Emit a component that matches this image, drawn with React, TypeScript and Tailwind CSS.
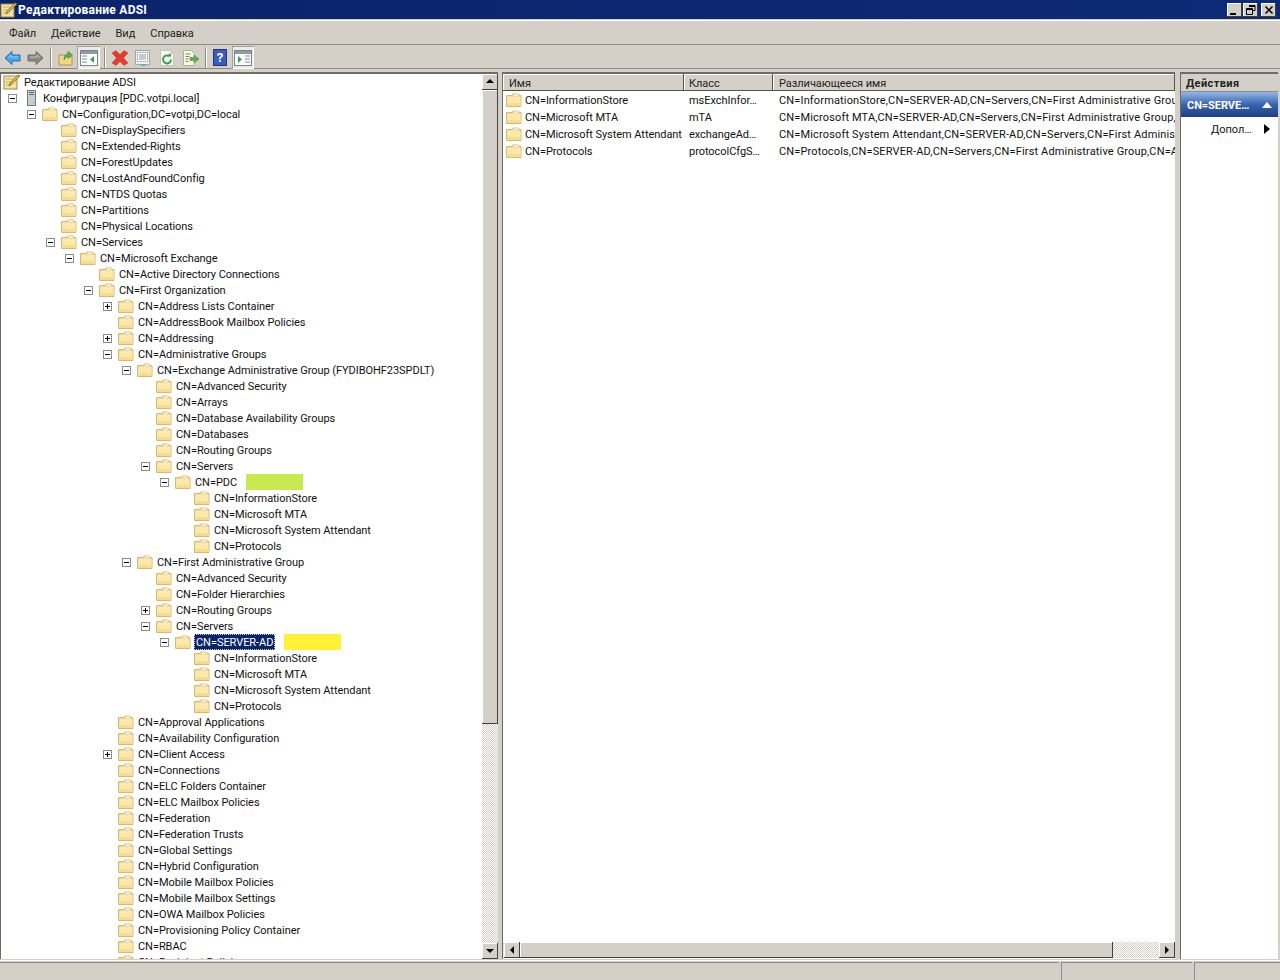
import type { ReactNode } from 'react'

type Node = { t: string; l: number; e?: '+' | '-'; mark?: 'green' | 'yellow'; sel?: boolean }

const stores = (): Node[] => [
  { t: 'CN=InformationStore', l: 10 },
  { t: 'CN=Microsoft MTA', l: 10 },
  { t: 'CN=Microsoft System Attendant', l: 10 },
  { t: 'CN=Protocols', l: 10 },
]

const tree: Node[] = [
  { t: 'CN=Configuration,DC=votpi,DC=local', l: 2, e: '-' },
  { t: 'CN=DisplaySpecifiers', l: 3 },
  { t: 'CN=Extended-Rights', l: 3 },
  { t: 'CN=ForestUpdates', l: 3 },
  { t: 'CN=LostAndFoundConfig', l: 3 },
  { t: 'CN=NTDS Quotas', l: 3 },
  { t: 'CN=Partitions', l: 3 },
  { t: 'CN=Physical Locations', l: 3 },
  { t: 'CN=Services', l: 3, e: '-' },
  { t: 'CN=Microsoft Exchange', l: 4, e: '-' },
  { t: 'CN=Active Directory Connections', l: 5 },
  { t: 'CN=First Organization', l: 5, e: '-' },
  { t: 'CN=Address Lists Container', l: 6, e: '+' },
  { t: 'CN=AddressBook Mailbox Policies', l: 6 },
  { t: 'CN=Addressing', l: 6, e: '+' },
  { t: 'CN=Administrative Groups', l: 6, e: '-' },
  { t: 'CN=Exchange Administrative Group (FYDIBOHF23SPDLT)', l: 7, e: '-' },
  { t: 'CN=Advanced Security', l: 8 },
  { t: 'CN=Arrays', l: 8 },
  { t: 'CN=Database Availability Groups', l: 8 },
  { t: 'CN=Databases', l: 8 },
  { t: 'CN=Routing Groups', l: 8 },
  { t: 'CN=Servers', l: 8, e: '-' },
  { t: 'CN=PDC', l: 9, e: '-', mark: 'green' },
  ...stores(),
  { t: 'CN=First Administrative Group', l: 7, e: '-' },
  { t: 'CN=Advanced Security', l: 8 },
  { t: 'CN=Folder Hierarchies', l: 8 },
  { t: 'CN=Routing Groups', l: 8, e: '+' },
  { t: 'CN=Servers', l: 8, e: '-' },
  { t: 'CN=SERVER-AD', l: 9, e: '-', sel: true, mark: 'yellow' },
  ...stores(),
  { t: 'CN=Approval Applications', l: 6 },
  { t: 'CN=Availability Configuration', l: 6 },
  { t: 'CN=Client Access', l: 6, e: '+' },
  { t: 'CN=Connections', l: 6 },
  { t: 'CN=ELC Folders Container', l: 6 },
  { t: 'CN=ELC Mailbox Policies', l: 6 },
  { t: 'CN=Federation', l: 6 },
  { t: 'CN=Federation Trusts', l: 6 },
  { t: 'CN=Global Settings', l: 6 },
  { t: 'CN=Hybrid Configuration', l: 6 },
  { t: 'CN=Mobile Mailbox Policies', l: 6 },
  { t: 'CN=Mobile Mailbox Settings', l: 6 },
  { t: 'CN=OWA Mailbox Policies', l: 6 },
  { t: 'CN=Provisioning Policy Container', l: 6 },
  { t: 'CN=RBAC', l: 6 },
  { t: 'CN=Recipient Policies', l: 6 },
]

const rows = [
  ['CN=InformationStore', 'msExchInfor…', 'CN=InformationStore,CN=SERVER-AD,CN=Servers,CN=First Administrative Group,CN=Administrative Groups'],
  ['CN=Microsoft MTA', 'mTA', 'CN=Microsoft MTA,CN=SERVER-AD,CN=Servers,CN=First Administrative Group,CN=Administrative Groups'],
  ['CN=Microsoft System Attendant', 'exchangeAd…', 'CN=Microsoft System Attendant,CN=SERVER-AD,CN=Servers,CN=First Administrative Group'],
  ['CN=Protocols', 'protocolCfgS…', 'CN=Protocols,CN=SERVER-AD,CN=Servers,CN=First Administrative Group,CN=Administrative Groups'],
]

function Folder() {
  return (
    <svg width="16" height="16" viewBox="0 0 16 16" className="shrink-0">
      <path d="M.5 3.500h5.500l1-1.500h5l1 1.500h2V14.500H.5z" fill="#f3dc9a" stroke="#d2b97e" />
      <rect x="1.500" y="5" width="13" height="9" fill="#fce9ab" />
      <rect x="1.500" y="11" width="13" height="3" fill="#f7dc8c" />
      <path d="M8 3h4" stroke="#fff" />
    </svg>
  )
}

function Snap() {
  return (
    <svg width="18" height="18" viewBox="0 0 18 18" className="shrink-0">
      <rect x="1" y="3" width="13" height="13" fill="#f2e2a4" stroke="#9a8a50" />
      <path d="M3 6h7M3 9h6M3 12h4" stroke="#c2ae6a" />
      <path d="M6 13l1-3 8-8 2 1-8 8z" fill="#e8b24a" stroke="#7a5a20" strokeWidth="0.7" />
    </svg>
  )
}

function Expander({ kind }: { kind: '+' | '-' }) {
  return (
    <span className="relative w-[9px] h-[9px] border border-[#8c8c8c] bg-white shrink-0">
      <span className="absolute left-[1px] top-[3px] w-[5px] h-px bg-black" />
      {kind === '+' && <span className="absolute left-[3px] top-[1px] w-px h-[5px] bg-black" />}
    </span>
  )
}

function TreeRow({ n }: { n: Node }) {
  const textX = 23 + 19 * n.l
  return (
    <div className="h-4 flex items-center relative whitespace-nowrap" style={{ paddingLeft: textX - 20 }}>
      {n.e && (
        <span className="absolute flex" style={{ left: textX - 35 }}>
          <Expander kind={n.e} />
        </span>
      )}
      <Folder />
      {n.sel ? (
        <span className="ml-[3px] px-px h-[16px] leading-[15px] bg-[#0a246a] text-white border border-dotted border-[#c8c8c8]">{n.t}</span>
      ) : (
        <span className="ml-1 mt-[2px]">{n.t}</span>
      )}
      {n.mark === 'green' && <span className="ml-[9px] w-[57px] h-4 bg-[#c9ea4f]" />}
      {n.mark === 'yellow' && <span className="ml-[9px] w-[57px] h-4 bg-[#fff236]" />}
    </div>
  )
}

function ScrollBtn({ dir }: { dir: 'up' | 'down' | 'left' | 'right' }) {
  const pts = { up: '1,6 9,6 5,2', down: '1,3 9,3 5,7', left: '7,1 7,9 3,5', right: '3,1 3,9 7,5' }[dir]
  return (
    <div className="w-4 h-4 shrink-0 bg-[#d4d0c8] shadow-[inset_-1px_-1px_0_#404040,inset_1px_1px_0_#fff] flex items-center justify-center">
      <svg width="10" height="10" viewBox="0 0 10 10">
        <polygon points={pts} fill="#000" />
      </svg>
    </div>
  )
}

function ToolBtn({ children, on, w }: { children: ReactNode; on?: boolean; w: string }) {
  return (
    <div className={`h-[23px] flex items-center justify-center shrink-0 ${w} ${on ? 'bg-[#ecebe8] shadow-[inset_1px_1px_0_#a5a29a,inset_-1px_-1px_0_#fff]' : ''}`}>
      {children}
    </div>
  )
}

function Sep() {
  return <div className="w-px h-[21px] bg-[#8f8c85] shadow-[1px_0_0_#fff] mx-[4px] shrink-0" />
}

function Arrow({ flip, c, s }: { flip?: boolean; c: string; s: string }) {
  return (
    <svg width="17" height="16" viewBox="0 0 17 16" style={flip ? { transform: 'scaleX(-1)' } : undefined}>
      <path d="M1 8l7-6.500V5h8v6H8v3.500z" fill={c} stroke={s} />
      <path d="M4 8l3-3v2h7" fill="none" stroke="#fff" strokeOpacity="0.45" />
    </svg>
  )
}

function PaneIcon({ right }: { right?: boolean }) {
  return (
    <svg width="18" height="16" viewBox="0 0 18 16">
      <rect x="0.500" y="0.500" width="17" height="15" fill="#fff" stroke="#77858f" />
      <rect x="1" y="1" width="16" height="3" fill="#8e9aa4" />
      <path d={right ? 'M11 6h5M11 9h5M11 12h5' : 'M2 6h5M2 9h5M2 12h5'} stroke="#7d8a94" />
      <path d={right ? 'M4 6v7l4-3.500z' : 'M14 6v7l-4-3.500z'} fill="#3f9e5e" />
    </svg>
  )
}

const headers = [
  ['Имя', 'w-[181px] pl-[6px]'],
  ['Класс', 'w-[89px] pl-[5px]'],
  ['Различающееся имя', 'flex-1 pl-[6px]'],
]

export default function App() {
  return (
    <div
      className="w-[1280px] h-[980px] overflow-hidden bg-[#d4d0c8] flex flex-col text-[11px] leading-4 text-[#111] tracking-[-0.05px]"
      style={{ fontFamily: 'Roboto, "Liberation Sans", sans-serif' }}
    >
      {/* title bar */}
      <div className="h-[19px] shrink-0 bg-gradient-to-r from-[#0a246a] to-[#0d2a78] flex items-center pr-[4px]">
        <Snap />
        <span className="text-white font-bold text-[12px] tracking-[0.25px]">Редактирование ADSI</span>
        <div className="ml-auto flex gap-px items-center">
          {['min', 'max'].map(k => (
            <div key={k} className="w-[15px] h-[14px] bg-[#d4d0c8] shadow-[inset_-1px_-1px_0_#404040,inset_1px_1px_0_#fff] flex items-center justify-center">
              {k === 'min' ? (
                <span className="w-[6px] h-[2px] bg-black mt-2 -ml-1" />
              ) : (
                <svg width="10" height="10" viewBox="0 0 10 10">
                  <path d="M3 .5h6v5H7M3 1.500h6M.5 3.500h6v6h-6zM.5 4.500h6" fill="none" stroke="#000" />
                </svg>
              )}
            </div>
          ))}
          <div className="w-[15px] h-[14px] ml-[2px] bg-[#d4d0c8] shadow-[inset_-1px_-1px_0_#404040,inset_1px_1px_0_#fff] flex items-center justify-center">
            <svg width="10" height="10" viewBox="0 0 10 10">
              <path d="M1.500 1.500l7 7M8.500 1.500l-7 7" stroke="#000" strokeWidth="1.500" />
            </svg>
          </div>
        </div>
      </div>

      {/* menu */}
      <div className="h-[25px] shrink-0 flex items-center gap-[15px] pl-[9px] pt-[2px] mt-px shadow-[inset_0_1px_0_#fff,inset_0_-1px_0_#8f8c85] text-[#222]">
        <span>Файл</span>
        <span>Действие</span>
        <span>Вид</span>
        <span>Справка</span>
      </div>

      {/* toolbar */}
      <div className="h-[24px] shrink-0 flex items-center pl-px pt-px shadow-[inset_0_-1px_0_#8f8c85]">
        <ToolBtn w="w-[23px]"><Arrow c="#4aa6e8" s="#1c6fb8" /></ToolBtn>
        <ToolBtn w="w-[22px]"><Arrow flip c="#8a8a86" s="#6c6c68" /></ToolBtn>
        <Sep />
        <ToolBtn w="w-[22px]">
          <svg width="16" height="17" viewBox="0 0 16 17">
            <path d="M1 6h5l1 1h7v9H1z" fill="#f2d784" stroke="#b0954f" />
            <path d="M6 11c0-4 1.500-6 4-6V2.500L14.500 6 10 9.500V7.500c-1.500 0-3 1.500-4 3.500z" fill="#5db04a" stroke="#2f7f2a" strokeWidth="0.6" />
          </svg>
        </ToolBtn>
        <ToolBtn on w="w-[23px]"><PaneIcon /></ToolBtn>
        <Sep />
        <ToolBtn w="w-[21px]">
          <svg width="18" height="16" viewBox="0 0 18 16">
            <path d="M1 3l4-2.500 4 4 4-4L17 3l-4.500 5 4.500 5-4 2.500-4-4-4 4L1 13l4.500-5z" fill="#e33b2e" stroke="#c43a30" strokeWidth="0.5" />
          </svg>
        </ToolBtn>
        <ToolBtn w="w-[25px]">
          <svg width="15" height="16" viewBox="0 0 15 16">
            <rect x="0.500" y="0.500" width="14" height="14" fill="#f1f1ec" stroke="#a5a59d" />
            <rect x="2.500" y="2.500" width="10" height="9" fill="#fff" stroke="#b6bcc2" />
            <path d="M4 5h7M4 7h7M4 9h7" stroke="#7f97ab" />
            <rect x="6" y="14" width="5" height="2" fill="#5fb4c8" />
          </svg>
        </ToolBtn>
        <ToolBtn w="w-[25px]">
          <svg width="15" height="17" viewBox="0 0 15 17">
            <path d="M.5 1.500h10l3 3v12H.5z" fill="#fafaf8" stroke="#c4c4bc" />
            <path d="M10.500 1.500l3 3h-3z" fill="#e6a8d0" />
            <path d="M11 10.500a4 4 0 1 1-1.500-3.200" fill="none" stroke="#3f9e4a" strokeWidth="2" />
            <path d="M8 4.500l3.500.8-1 3.200z" fill="#3f9e4a" />
          </svg>
        </ToolBtn>
        <ToolBtn w="w-[21px]">
          <svg width="17" height="16" viewBox="0 0 17 16">
            <path d="M1.500.5h8l3 3v12h-11z" fill="#f8f6e6" stroke="#b5b08a" />
            <path d="M3.500 4h5M3.500 6.500h4M3.500 9h3M3.500 11.500h3" stroke="#8a8258" />
            <path d="M8 7.500h4V5l5 4-5 4v-2.500H8z" fill="#58b24a" stroke="#3a8a30" strokeWidth="0.5" />
          </svg>
        </ToolBtn>
        <Sep />
        <ToolBtn w="w-[22px]">
          <div className="w-[14px] h-[17px] bg-[#3d5bb8] border border-[#1f3580] flex items-center justify-center text-white font-bold text-[13px] -ml-[2px]">?</div>
        </ToolBtn>
        <ToolBtn on w="w-[22px]"><PaneIcon right /></ToolBtn>
      </div>

      {/* panes */}
      <div className="h-[889px] shrink-0 flex mt-[3px] shadow-[inset_0_-1px_0_#fff]">
        {/* tree */}
        <div className="w-[498px] shrink-0 h-[887px] flex bg-white border-t-2 border-l border-[#6e6c66]">
          <div className="flex-1 overflow-hidden">
            <div className="h-4 flex items-center pl-[2px] whitespace-nowrap">
              <Snap />
              <span className="ml-[3px] mt-[2px]">Редактирование ADSI</span>
            </div>
            <div className="h-4 flex items-center relative pl-[24px] whitespace-nowrap">
              <span className="absolute left-[7px] flex"><Expander kind="-" /></span>
              <svg width="13" height="16" viewBox="0 0 13 16" className="shrink-0">
                <rect x="2.500" y="0.500" width="8" height="15" fill="#c8ced2" stroke="#6f7a80" />
                <rect x="4" y="2" width="5" height="1" fill="#5e6a72" />
                <rect x="4" y="4" width="5" height="1" fill="#5e6a72" />
                <rect x="8" y="12" width="1" height="1" fill="#3fa64a" />
              </svg>
              <span className="ml-[5px] mt-[2px]">Конфигурация [PDC.votpi.local]</span>
            </div>
            {tree.map((n, i) => <TreeRow key={i} n={n} />)}
          </div>
          <div className="w-4 shrink-0 flex flex-col bg-[repeating-conic-gradient(#d4d0c8_0_25%,#fff_0_50%)] bg-[length:2px_2px]">
            <ScrollBtn dir="up" />
            <div className="h-[634px] shrink-0 bg-[#d4d0c8] shadow-[inset_-1px_-1px_0_#404040,inset_1px_1px_0_#fff]" />
            <div className="flex-1" />
            <ScrollBtn dir="down" />
          </div>
        </div>

        <div className="w-[4px] shrink-0" />

        {/* list */}
        <div className="w-[673px] shrink-0 h-[887px] bg-white border-t-2 border-l border-[#6e6c66] flex flex-col">
          <div className="h-[17px] shrink-0 flex bg-[#d4d0c8] text-[#222]">
            {headers.map(([h, w]) => (
              <div key={h} className={`${w} leading-[19px] shadow-[inset_-1px_-1px_0_#55534e,inset_1px_1px_0_#fff]`}>{h}</div>
            ))}
          </div>
          <div className="flex-1">
            {rows.map(r => (
              <div key={r[0]} className="h-[17px] flex items-center whitespace-nowrap">
                <div className="w-[181px] shrink-0 flex items-center pl-[3px] overflow-hidden">
                  <Folder />
                  <span className="ml-[3px] mt-[2px]">{r[0]}</span>
                </div>
                <div className="w-[89px] shrink-0 pl-[5px] overflow-hidden mt-[2px]">{r[1]}</div>
                <div className="flex-1 pl-[6px] overflow-hidden mt-[2px] tracking-[0.15px]">{r[2]}</div>
              </div>
            ))}
          </div>
          <div className="h-4 shrink-0 flex pl-px mb-px bg-[repeating-conic-gradient(#d4d0c8_0_25%,#fff_0_50%)] bg-[length:2px_2px]">
            <ScrollBtn dir="left" />
            <div className="w-[593px] shrink-0 bg-[#d4d0c8] shadow-[inset_-1px_-1px_0_#404040,inset_1px_1px_0_#fff]" />
            <div className="flex-1" />
            <ScrollBtn dir="right" />
          </div>
        </div>

        <div className="w-[5px] shrink-0" />

        {/* actions */}
        <div className="w-[98px] shrink-0 h-[887px] bg-white border-t-2 border-l border-[#6e6c66] flex flex-col">
          <div className="h-[18px] shrink-0 bg-[#d4d0c8] pl-[5px] font-bold text-[#222] leading-[20px] tracking-[0.4px] border-b border-[#8f8c85]">Действия</div>
          <div className="h-[25px] shrink-0 bg-gradient-to-b from-[#93b8e8] via-[#3a63ad] to-[#1d3f8c] flex items-center pl-[6px] pr-[6px] text-white font-bold">
            <span className="mt-[2px]">CN=SERVE…</span>
            <svg width="10" height="6" viewBox="0 0 10 6" className="ml-auto">
              <polygon points="0,6 10,6 5,0" fill="#fff" />
            </svg>
          </div>
          <div className="h-[24px] flex items-center pl-[30px] pr-[8px]">
            <span className="mt-[2px]">Допол…</span>
            <svg width="6" height="10" viewBox="0 0 6 10" className="ml-auto">
              <polygon points="0,0 6,5 0,10" fill="#000" />
            </svg>
          </div>
        </div>
      </div>

      {/* status bar */}
      <div className="flex-1 flex gap-[2px] pt-px">
        <div className="w-[1059px] border-t border-[#8f8c85]" />
        <div className="w-[131px] border-t border-l border-[#8f8c85]" />
        <div className="flex-1 border-t border-l border-[#8f8c85]" />
      </div>
    </div>
  )
}
